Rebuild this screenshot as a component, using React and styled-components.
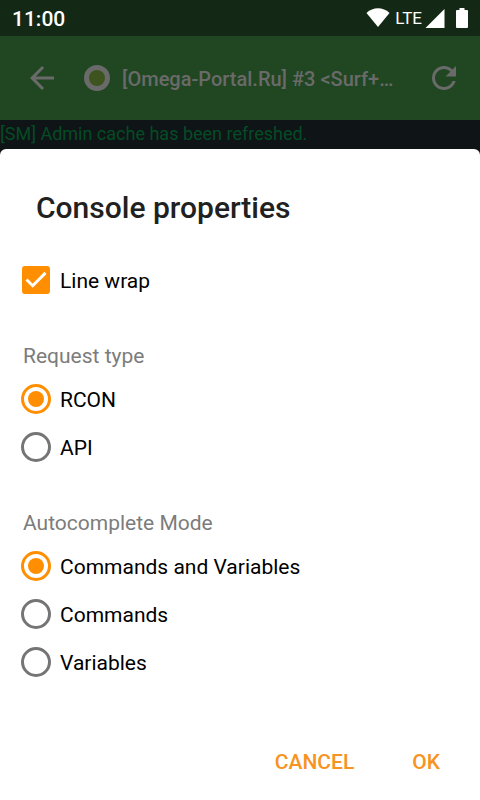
import React, { useState } from "react";
import styled, { createGlobalStyle } from "styled-components";

const GlobalStyle = createGlobalStyle`
  *, *::before, *::after { box-sizing: border-box; }
  body {
    margin: 0;
    background: #0f1417;
    font-family: Roboto, "Noto Sans", sans-serif;
  }
  button, input { font-family: inherit; }
`;

const Screen = styled.div`
  display: flex;
  flex-direction: column;
  min-height: 100vh;
  background: #0f1417;
`;

const StatusBar = styled.div`
  display: flex;
  align-items: center;
  justify-content: space-between;
  height: 36px;
  padding: 0 12px;
  background: #142915;
  color: #fff;
`;

const Clock = styled.time`
  padding-top: 2px;
  font-size: 21px;
  font-weight: 500;
  line-height: 34px;
`;

const StatusIcons = styled.div`
  display: flex;
  align-items: center;
  height: 36px;

  svg { display: block; fill: #fff; }
`;

const Network = styled.span`
  margin: 0 3px 0 5px;
  font-size: 17px;
  line-height: 36px;
`;

const BatteryIcon = styled.svg`
  margin-left: 11px;
`;

const Toolbar = styled.header`
  display: flex;
  align-items: center;
  height: 84px;
  padding: 0 12px 0 18px;
  background: #204722;
  color: #6a6a6a;
`;

const IconButton = styled.button`
  display: flex;
  align-items: center;
  justify-content: center;
  flex: none;
  width: 48px;
  height: 48px;
  padding: 0;
  border: 0;
  background: none;
  color: inherit;
`;

const ServerState = styled.span`
  flex: none;
  width: 26px;
  height: 26px;
  margin: 0 12px 0 18px;
  border: 5px solid #6a6a6a;
  border-radius: 50%;
  background: #3d541e;
`;

const ServerName = styled.h1`
  flex: 1;
  min-width: 0;
  margin: 0 20px 0 0;
  padding-top: 2px;
  overflow: hidden;
  font-size: 20px;
  font-weight: 500;
  line-height: 28px;
  text-overflow: ellipsis;
  white-space: nowrap;
`;

const ConsoleLine = styled.p`
  margin: 0;
  height: 29px;
  font-size: 18px;
  line-height: 28px;
  color: #044c25;
`;

const Sheet = styled.form`
  display: flex;
  flex: 1;
  flex-direction: column;
  border-radius: 6px 6px 0 0;
  background: #fff;
`;

const SheetTitle = styled.h2`
  margin: 0;
  padding: 41px 36px 30px;
  font-size: 30px;
  font-weight: 500;
  line-height: 36px;
  color: #212121;
`;

const Options = styled.div`
  display: flex;
  flex-direction: column;
  gap: 34px;
  padding: 0 21px;
`;

const Group = styled.fieldset`
  min-width: 0;
  margin: 0;
  padding: 0;
  border: 0;
`;

const GroupLabel = styled.legend`
  padding: 0 2px 1px;
  font-size: 21px;
  line-height: 36px;
  color: #7c7c7c;
`;

const Choice = styled.label`
  display: flex;
  align-items: center;
  gap: 9px;
  height: 48px;
  font-size: 21px;
  line-height: 28px;
  color: #000;
`;

const ChoiceText = styled.span`
  padding-top: 2px;
`;

const Radio = styled.input.attrs({ type: "radio" })`
  appearance: none;
  display: grid;
  place-items: center;
  flex: none;
  width: 30px;
  height: 30px;
  margin: 0;
  border: 3px solid #757575;
  border-radius: 50%;

  &:checked { border-color: #ff8f00; }
  &:checked::before {
    content: "";
    width: 16px;
    height: 16px;
    border-radius: 50%;
    background: #ff8f00;
  }
`;

const CheckMark = styled.span`
  display: grid;
  flex: none;
  width: 30px;
  height: 30px;
  place-items: center;

  > * { grid-area: 1 / 1; }
  svg { pointer-events: none; visibility: hidden; }
  input:checked + svg { visibility: visible; }
`;

const Checkbox = styled.input.attrs({ type: "checkbox" })`
  appearance: none;
  width: 28px;
  height: 28px;
  margin: 0;
  border: 3px solid #757575;
  border-radius: 3px;

  &:checked {
    border-color: #ff8f00;
    background: #ff8f00;
  }
`;

const Actions = styled.div`
  display: flex;
  justify-content: flex-end;
  gap: 34px;
  margin-top: auto;
  padding: 12px 28px 11px;
`;

const TextButton = styled.button`
  height: 54px;
  padding: 0 12px;
  border: 0;
  background: none;
  font-size: 21px;
  font-weight: 500;
  color: #f7931e;
`;

const REQUEST_TYPES = ["RCON", "API"];
const COMPLETE_MODES = ["Commands and Variables", "Commands", "Variables"];

function RadioGroup({ label, name, options }) {
  const [value, setValue] = useState(options[0]);
  return (
    <Group>
      <GroupLabel>{label}</GroupLabel>
      {options.map((option) => (
        <Choice key={option}>
          <Radio
            name={name}
            value={option}
            checked={value === option}
            onChange={() => setValue(option)}
          />
          <ChoiceText>{option}</ChoiceText>
        </Choice>
      ))}
    </Group>
  );
}

export default function App() {
  const [wrap, setWrap] = useState(true);
  return (
    <Screen>
      <GlobalStyle />
      <StatusBar>
        <Clock>11:00</Clock>
        <StatusIcons>
          <svg width="24" height="20" viewBox="0 0 24 20" aria-hidden="true">
            <path d="M0.5 5C7 -1.2 17 -1.2 23.5 5L12 19Z" />
          </svg>
          <Network>LTE</Network>
          <svg width="20" height="19" viewBox="0 0 20 19" aria-hidden="true">
            <path d="M19.5 0V19H0.5Z" />
          </svg>
          <BatteryIcon width="12" height="20" viewBox="0 0 12 20" aria-hidden="true">
            <path d="M3.5 0H8.5V2H11Q12 2 12 3V19Q12 20 11 20H1Q0 20 0 19V3Q0 2 1 2H3.5Z" />
          </BatteryIcon>
        </StatusIcons>
      </StatusBar>
      <Toolbar>
        <IconButton type="button" aria-label="Back">
          <svg width="36" height="36" viewBox="0 0 24 24" fill="currentColor">
            <path d="M20 11H7.83l5.59-5.59L12 4l-8 8 8 8 1.41-1.41L7.83 13H20v-2z" />
          </svg>
        </IconButton>
        <ServerState />
        <ServerName>[Omega-Portal.Ru] #3 &lt;Surf+…</ServerName>
        <IconButton type="button" aria-label="Refresh">
          <svg width="36" height="36" viewBox="0 0 24 24" fill="currentColor">
            <path d="M17.65 6.35C16.2 4.9 14.21 4 12 4c-4.42 0-7.99 3.58-7.99 8s3.57 8 7.99 8c3.73 0 6.84-2.55 7.73-6h-2.08c-.82 2.33-3.04 4-5.65 4-3.31 0-6-2.69-6-6s2.69-6 6-6c1.66 0 3.14.69 4.22 1.78L13 11h7V4l-2.35 2.35z" />
          </svg>
        </IconButton>
      </Toolbar>
      <ConsoleLine>[SM] Admin cache has been refreshed.</ConsoleLine>
      <Sheet role="dialog" aria-label="Console properties">
        <SheetTitle>Console properties</SheetTitle>
        <Options>
          <Choice>
            <CheckMark>
              <Checkbox checked={wrap} onChange={(e) => setWrap(e.target.checked)} />
              <svg width="28" height="28" viewBox="0 0 28 28" fill="none" stroke="#fff" strokeWidth="2.9" aria-hidden="true">
                <path d="M4.5 13.5L10.7 19.7L23.5 6.9" />
              </svg>
            </CheckMark>
            <ChoiceText>Line wrap</ChoiceText>
          </Choice>
          <RadioGroup label="Request type" name="request" options={REQUEST_TYPES} />
          <RadioGroup label="Autocomplete Mode" name="complete" options={COMPLETE_MODES} />
        </Options>
        <Actions>
          <TextButton type="button">CANCEL</TextButton>
          <TextButton type="button">OK</TextButton>
        </Actions>
      </Sheet>
    </Screen>
  );
}
